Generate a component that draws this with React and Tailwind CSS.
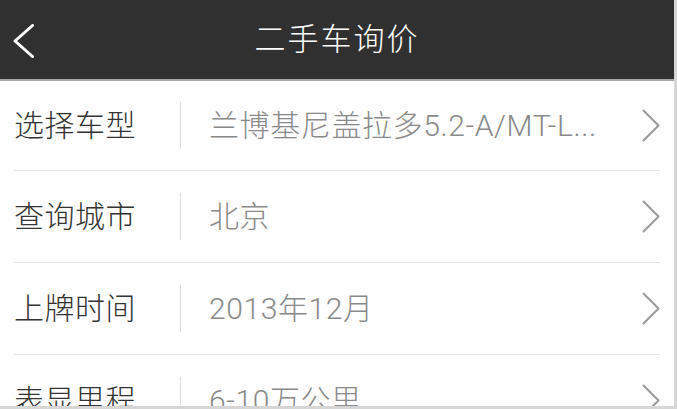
import React from 'react';

const rows = [
  { label: '选择车型', value: '兰博基尼盖拉多5.2-A/MT-L...' },
  { label: '查询城市', value: '北京' },
  { label: '上牌时间', value: '2013年12月' },
  { label: '表显里程', value: '6-10万公里' },
];

function Chevron({ className }) {
  return (
    <svg className={className} viewBox="0 0 18 33" fill="none">
      <path d="M1.5 1.5 L16.5 16.5 L1.5 31.5" stroke="currentColor" strokeWidth="2" strokeLinecap="round" strokeLinejoin="round" />
    </svg>
  );
}

export default function App() {
  return (
    <div
      className="w-[677px] h-[409px] overflow-hidden bg-white border-r-[3px] border-b-[3px] border-[#d6d6d6]"
      style={{ fontFamily: 'Roboto, "Noto Sans CJK SC", sans-serif' }}
    >
      <header className="relative h-[81px] bg-[#303030] border-b-2 border-[#a8a8a8] flex items-center justify-center">
        <svg className="absolute left-[13px] top-[24px] w-[22px] h-[34px]" viewBox="0 0 22 34" fill="none">
          <path d="M19.5 1.5 L2 17 L19.5 32.5" stroke="white" strokeWidth="3" strokeLinecap="round" strokeLinejoin="round" />
        </svg>
        <h1 className="text-[31px] leading-[40px] font-light text-white tracking-[2px]">二手车询价</h1>
      </header>

      <div className="mx-[14px]">
        {rows.map((row) => (
          <div key={row.label} className="h-[92px] flex items-center border-b border-[#e4e4e4] first:h-[90px]">
            <span className="w-[166px] shrink-0 text-[30px] leading-[40px] font-light text-[#333333] tracking-[0.5px]">{row.label}</span>
            <span className="w-px h-[47px] bg-[#dedede] shrink-0" />
            <span className="ml-[28px] flex-1 min-w-0 text-[30px] leading-[40px] font-light text-[#8a8a8a] tracking-[0.6px] whitespace-nowrap">
              {row.value}
            </span>
            <Chevron className="w-[18px] h-[33px] text-[#9a9a9a] shrink-0" />
          </div>
        ))}
      </div>
    </div>
  );
}
